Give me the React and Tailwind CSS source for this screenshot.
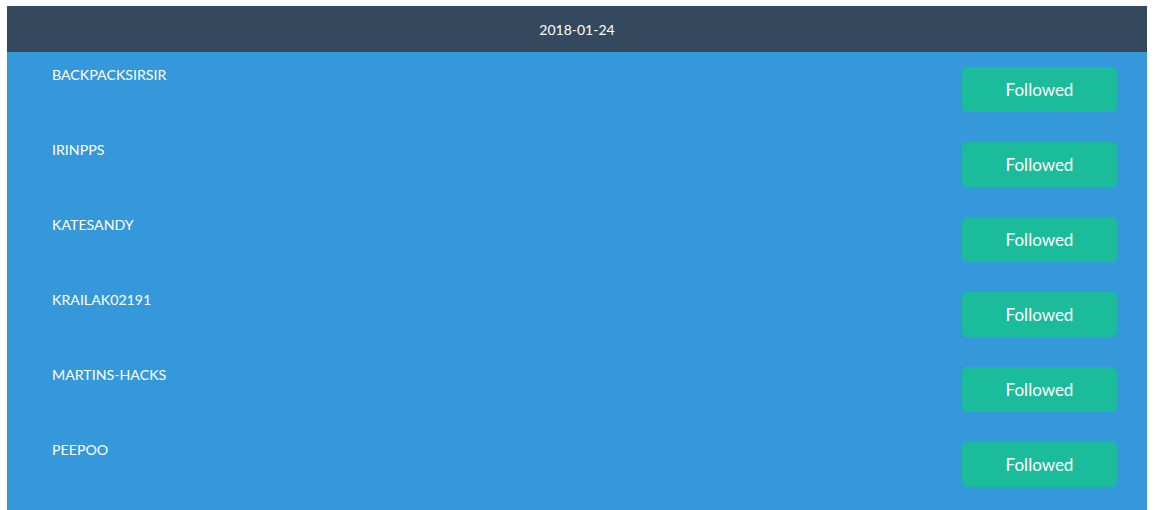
import React from 'react';

const users = ['BACKPACKSIRSIR', 'IRINPPS', 'KATESANDY', 'KRAILAK02191', 'MARTINS-HACKS', 'PEEPOO'];

const FollowRow = ({ name }) => (
  <div className="flex items-start justify-between h-[75px] pl-[45px] pr-[30px]">
    <div className="pt-[13px] text-[14.2px] leading-[20px] text-white">{name}</div>
    <button className="mt-[15px] w-[155px] h-[45px] rounded-[5px] bg-[#1abc9c] text-white text-[17px]">
      Followed
    </button>
  </div>
);

export default function App() {
  return (
    <div className="min-h-screen bg-white pt-[6px] px-[7px] font-['Lato','Liberation_Sans',sans-serif]">
      <div className="w-[1140px]">
        <div className="h-[46px] bg-[#34495e] flex items-center justify-center text-white text-[14px]">
          2018-01-24
        </div>
        <div className="bg-[#3498db] h-[460px]">
          {users.map((u) => (
            <FollowRow key={u} name={u} />
          ))}
        </div>
      </div>
    </div>
  );
}
